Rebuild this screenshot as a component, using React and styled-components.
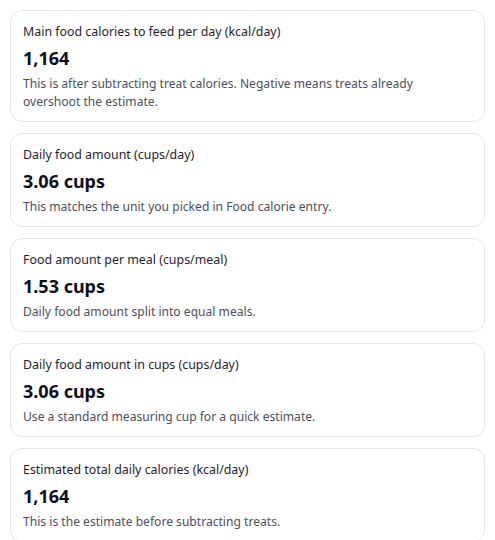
import React from 'react'
import styled, { createGlobalStyle } from 'styled-components'

const results = [
  {
    id: 1,
    label: 'Main food calories to feed per day (kcal/day)',
    value: '1,164',
    note: 'This is after subtracting treat calories. Negative means treats already overshoot the estimate.',
  },
  {
    id: 2,
    label: 'Daily food amount (cups/day)',
    value: '3.06 cups',
    note: 'This matches the unit you picked in Food calorie entry.',
  },
  {
    id: 3,
    label: 'Food amount per meal (cups/meal)',
    value: '1.53 cups',
    note: 'Daily food amount split into equal meals.',
  },
  {
    id: 4,
    label: 'Daily food amount in cups (cups/day)',
    value: '3.06 cups',
    note: 'Use a standard measuring cup for a quick estimate.',
  },
  {
    id: 5,
    label: 'Estimated total daily calories (kcal/day)',
    value: '1,164',
    note: 'This is the estimate before subtracting treats.',
  },
]

const GlobalStyle = createGlobalStyle`
  * {
    box-sizing: border-box;
  }
  body {
    margin: 0;
    background: #ffffff;
    font-family: 'Segoe UI', 'Noto Sans', 'Open Sans', sans-serif;
  }
`

const List = styled.div`
  display: flex;
  flex-direction: column;
  gap: 11px;
  padding: 10px 10px 0 10px;
`

const Card = styled.div`
  border: 1px solid #e6e6e9;
  border-radius: 12px;
  padding: 12px 12px 10px 12px;
  background: #fff;
`

const Label = styled.div`
  font-size: 12.4px;
  line-height: 18px;
  color: #1f2330;
`

const Value = styled.div`
  margin-top: 6px;
  font-size: 18px;
  line-height: 22px;
  font-weight: 700;
  color: #0b0f1c;
`

const Note = styled.div`
  margin-top: 6px;
  font-size: 12.1px;
  line-height: 18px;
  color: #4b5060;
`

export default function App() {
  return (
    <>
      <GlobalStyle />
      <List>
        {results.map((r) => (
          <Card key={r.id}>
            <Label>{r.label}</Label>
            <Value>{r.value}</Value>
            <Note>{r.note}</Note>
          </Card>
        ))}
      </List>
    </>
  )
}
